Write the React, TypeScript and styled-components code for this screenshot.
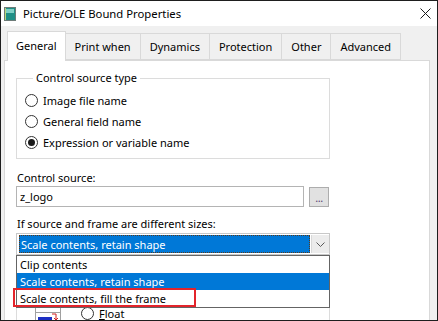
import React from 'react';
import styled, { createGlobalStyle } from 'styled-components';

const Global = createGlobalStyle`
  html, body { margin: 0; padding: 0; background: #ffffff; }
  body { font-family: "Noto Sans", "Segoe UI", sans-serif; font-size: 11px; color: #000; }
  * { box-sizing: border-box; }
`;

const Window = styled.div`
  width: 438px;
  height: 321px;
  border: 1px solid #1e1e1e;
  background: #f0f0f0;
  display: flex;
  flex-direction: column;
  overflow: hidden;
`;

const TitleBar = styled.div`
  height: 25px;
  flex-shrink: 0;
  background: #ffffff;
  display: flex;
  align-items: center;
  padding-left: 3px;
  padding-right: 6px;
`;

const Title = styled.span`
  margin-left: 7px;
  font-size: 11.3px;
  line-height: 16px;
`;

const CloseButton = styled.div`
  margin-left: auto;
  width: 11px;
  height: 11px;
  display: flex;
`;

const Body = styled.div`
  flex: 1;
  display: flex;
  flex-direction: column;
  padding: 5px 7px 0 3px;
  min-height: 0;
`;

const TabStrip = styled.div`
  display: flex;
  align-items: flex-end;
  height: 29px;
  padding-left: 3px;
  position: relative;
  z-index: 1;
`;

const Tab = styled.div<{ $active?: boolean }>`
  height: ${p => (p.$active ? 30 : 27)}px;
  margin-bottom: ${p => (p.$active ? -1 : 0)}px;
  padding: 0 ${p => (p.$active ? 8 : 9)}px;
  margin-left: -1px;
  border: 1px solid #d9d9d9;
  border-bottom: ${p => (p.$active ? 'none' : '1px solid #d9d9d9')};
  background: ${p => (p.$active ? '#ffffff' : '#f0f0f0')};
  display: flex;
  align-items: center;
  padding-bottom: ${p => (p.$active ? 2 : 0)}px;
  white-space: nowrap;
  &:first-child { margin-left: 0; }
`;

const Panel = styled.div`
  flex: 1;
  background: #ffffff;
  border: 1px solid #d9d9d9;
  border-bottom: none;
  padding: 0 0 0 11px;
  display: flex;
  flex-direction: column;
  align-items: flex-start;
`;

const GroupBox = styled.fieldset<{ $top: number }>`
  margin: ${p => p.$top}px 0 0 0;
  padding: 0 0 5px 8px;
  width: 314px;
  border: 1px solid #dcdcdc;
  min-inline-size: 0;
`;

const Legend = styled.legend`
  margin-left: 8px;
  padding: 0 3px;
  line-height: 16px;
`;

const RadioRow = styled.label`
  height: 21px;
  display: flex;
  align-items: center;
  gap: 5px;
  white-space: nowrap;
`;

const RadioList = styled.div`
  padding-top: 4px;
  display: flex;
  flex-direction: column;
`;

const RadioCircle = styled.span<{ $checked?: boolean }>`
  width: 13px;
  height: 13px;
  border-radius: 50%;
  border: 1px solid #333333;
  background: #ffffff;
  display: flex;
  align-items: center;
  justify-content: center;
  flex-shrink: 0;
  &::after {
    content: '';
    width: 7px;
    height: 7px;
    border-radius: 50%;
    background: ${p => (p.$checked ? '#1a1a1a' : 'transparent')};
  }
`;

const FieldLabel = styled.div<{ $top: number }>`
  margin-top: ${p => p.$top}px;
  margin-left: 1px;
  line-height: 16px;
  white-space: nowrap;
`;

const InputRow = styled.div`
  display: flex;
  align-items: flex-start;
  gap: 5px;
`;

const TextBox = styled.div`
  width: 288px;
  height: 21px;
  border: 1px solid #b4b4b4;
  padding-left: 3px;
  display: flex;
  align-items: center;
`;

const EllipsisButton = styled.div`
  width: 20px;
  height: 20px;
  margin-top: 1px;
  border: 1px solid #adadad;
  background: #e1e1e1;
  display: flex;
  align-items: flex-end;
  justify-content: center;
  padding-bottom: 3px;
  font-size: 11px;
  line-height: 11px;
  color: #5b3f73;
  letter-spacing: -0.5px;
`;

const ComboWrap = styled.div`
  position: relative;
  margin-top: 1px;
  z-index: 2;
`;

const Combo = styled.div`
  width: 314px;
  height: 22px;
  border: 1px solid #c8c8c8;
  background: #ffffff;
  display: flex;
  padding: 1px 0 1px 2px;
`;

const ComboValue = styled.div`
  flex: 1;
  background: #0078d7;
  color: #ffffff;
  border: 1px dotted #5c3a1a;
  display: flex;
  align-items: center;
  padding-left: 1px;
  white-space: nowrap;
`;

const ComboButton = styled.div`
  width: 18px;
  margin-left: 1px;
  border-left: 1px solid #d8d8d8;
  background: #ececec;
  display: flex;
  align-items: center;
  justify-content: center;
`;

const DropList = styled.div`
  position: absolute;
  top: 100%;
  left: 0;
  width: 314px;
  border: 1px solid #646464;
  background: #ffffff;
  display: flex;
  flex-direction: column;
`;

const DropItem = styled.div<{ $selected?: boolean }>`
  height: 17px;
  padding-left: 3px;
  display: flex;
  align-items: center;
  white-space: nowrap;
  position: relative;
  background: ${p => (p.$selected ? '#0078d7' : '#ffffff')};
  color: ${p => (p.$selected ? '#ffffff' : '#000000')};
`;

const Annotation = styled.span`
  position: absolute;
  left: -4px;
  top: -2px;
  width: 183px;
  height: 19px;
  border: 2px solid #e3242b;
`;

const LowerGroup = styled.div`
  margin-top: 10px;
  width: 314px;
  border: 1px solid #dcdcdc;
  border-bottom: none;
  flex: 1;
  display: flex;
  align-items: flex-start;
  padding: 37px 0 0 18px;
  gap: 20px;
`;

const PictureSlot = styled.div`
  margin-top: 3px;
  display: flex;
`;

const Accel = styled.span`
  text-decoration: underline;
`;

const AppIcon = () => (
  <svg width="12" height="14" viewBox="0 0 12 14">
    <rect x="0.5" y="0.5" width="11" height="13" fill="#1f8f86" stroke="#6d7b78" />
    <rect x="2" y="2" width="8" height="4" fill="#7fd0c6" />
    <rect x="1" y="1" width="1" height="12" fill="#b9d77a" />
  </svg>
);

const PositionPicture = () => (
  <svg width="26" height="16" viewBox="0 0 26 16">
    <rect x="0.5" y="0.5" width="25" height="15" fill="#ffffff" stroke="#a0a0a0" />
    <line x1="1" y1="6.5" x2="25" y2="6.5" stroke="#a0a0a0" />
    <rect x="3" y="11" width="14" height="5" fill="#1d2fc4" />
    <path d="M17 8 h4 v6 M19 12 l2 2 l2 -2" stroke="#d02020" fill="none" />
  </svg>
);

export default function App() {
  return (
    <>
      <Global />
      <Window>
        <TitleBar>
          <AppIcon />
          <Title>Picture/OLE Bound Properties</Title>
          <CloseButton>
            <svg width="11" height="11" viewBox="0 0 11 11">
              <path d="M0.5 0.5 L10.5 10.5 M10.5 0.5 L0.5 10.5" stroke="#1a1a1a" strokeWidth="1" />
            </svg>
          </CloseButton>
        </TitleBar>
        <Body>
          <TabStrip>
            <Tab $active>General</Tab>
            <Tab>Print when</Tab>
            <Tab>Dynamics</Tab>
            <Tab>Protection</Tab>
            <Tab>Other</Tab>
            <Tab>Advanced</Tab>
          </TabStrip>
          <Panel>
            <GroupBox $top={9}>
              <Legend>Control source type</Legend>
              <RadioList>
                <RadioRow><RadioCircle />Image file name</RadioRow>
                <RadioRow><RadioCircle />General field name</RadioRow>
                <RadioRow><RadioCircle $checked />Expression or variable name</RadioRow>
              </RadioList>
            </GroupBox>
            <FieldLabel $top={11}>Control source:</FieldLabel>
            <InputRow>
              <TextBox>z_logo</TextBox>
              <EllipsisButton>...</EllipsisButton>
            </InputRow>
            <FieldLabel $top={9}>If source and frame are different sizes:</FieldLabel>
            <ComboWrap>
              <Combo>
                <ComboValue>Scale contents, retain shape</ComboValue>
                <ComboButton>
                  <svg width="9" height="5" viewBox="0 0 9 5">
                    <path d="M0.5 0.5 L4.5 4.5 L8.5 0.5" stroke="#5a5a5a" fill="none" />
                  </svg>
                </ComboButton>
              </Combo>
              <DropList>
                <DropItem>Clip contents</DropItem>
                <DropItem $selected>Scale contents, retain shape</DropItem>
                <DropItem>Scale contents, fill the frame<Annotation /></DropItem>
              </DropList>
            </ComboWrap>
            <LowerGroup>
              <PictureSlot><PositionPicture /></PictureSlot>
              <RadioRow><RadioCircle /><span><Accel>F</Accel>loat</span></RadioRow>
            </LowerGroup>
          </Panel>
        </Body>
      </Window>
    </>
  );
}
